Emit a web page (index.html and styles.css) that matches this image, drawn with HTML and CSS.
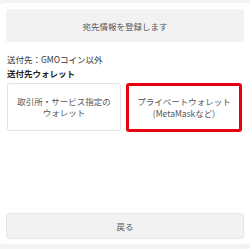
FILE: index.html
```html
<!DOCTYPE html>
<html lang="ja">
<head>
<meta charset="utf-8">
<link rel="stylesheet" href="styles.css">
</head>
<body>
<div class="card">
  <div class="btn-top">宛先情報を登録します</div>
  <div class="info">送付先：GMOコイン以外</div>
  <div class="label">送付先ウォレット</div>
  <div class="options">
    <div class="opt">取引所・サービス指定の<br>ウォレット</div>
    <div class="opt selected">プライベートウォレット<br>(MetaMaskなど)</div>
  </div>
  <div class="btn-back">戻る</div>
</div>
</body>
</html>
```
FILE: styles.css
```css
html, body {
  margin: 0;
  padding: 0;
  background: #f3f3f3;
  font-family: "Noto Sans CJK JP", "Noto Sans", sans-serif;
}
.card {
  margin-top: 3px;
  height: 241px;
  box-sizing: border-box;
  background: #fff;
  border-radius: 4px;
  padding: 6px 6px 5px;
  display: flex;
  flex-direction: column;
}
.btn-top {
  height: 33px;
  background: #f2f2f2;
  border-radius: 2px;
  display: flex;
  align-items: center;
  justify-content: center;
  font-size: 8.5px;
  color: #555;
}
.info {
  margin-top: 11px;
  padding-left: 1px;
  font-size: 8.5px;
  line-height: 12px;
  color: #333;
}
.label {
  margin-top: 2px;
  padding-left: 1px;
  font-size: 8.5px;
  line-height: 12px;
  font-weight: bold;
  color: #222;
}
.options {
  margin: 4px 2px 0 1px;
  display: grid;
  grid-template-columns: 114px 116px;
  column-gap: 5px;
}
.opt {
  height: 48px;
  box-sizing: border-box;
  border: 1px solid #e2e2e2;
  border-radius: 3px;
  display: flex;
  align-items: center;
  justify-content: center;
  text-align: center;
  font-size: 8.5px;
  line-height: 11.5px;
  color: #555;
}
.opt.selected {
  border: 3px solid #e60012;
  height: 49px;
}
.btn-back {
  margin-top: auto;
  height: 26px;
  box-sizing: border-box;
  background: #f2f2f2;
  border: 1px solid #e6e6e6;
  border-radius: 3px;
  display: flex;
  align-items: center;
  justify-content: center;
  font-size: 8.5px;
  color: #555;
}
```
